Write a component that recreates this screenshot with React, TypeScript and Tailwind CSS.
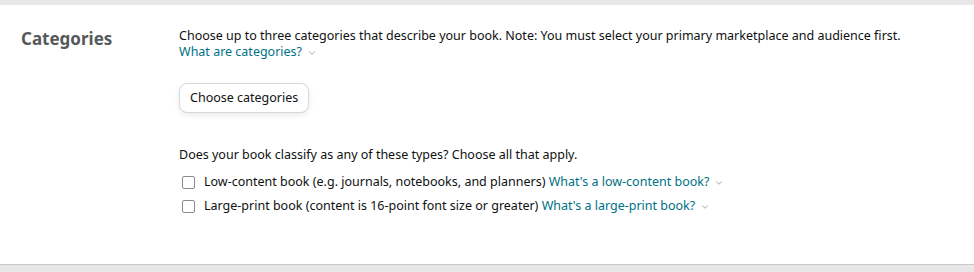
import { ChevronDown } from 'lucide-react'

function HelpLink({ label }: { label: string }) {
  return (
    <a href="#" className="inline-flex items-center gap-[5px] text-[#007185] hover:underline">
      {label}
      <ChevronDown size={10} strokeWidth={1.5} className="text-[#6f7373] mt-[1px]" />
    </a>
  )
}

function TypeCheckbox({ label, help }: { label: string; help: string }) {
  return (
    <label className="flex items-center gap-[9px] pl-[3px]">
      <input type="checkbox" className="w-[13px] h-[13px] m-0 appearance-none rounded-[2px] border border-[#888c8c] bg-white" />
      <span>
        {label} <HelpLink label={help} />
      </span>
    </label>
  )
}

export default function App() {
  return (
    <div className="w-[974px] h-[272px] bg-[#e7e7e7] flex flex-col font-['Noto_Sans',sans-serif] text-[12.5px] text-[#0f1111]">
      <div className="mt-[5px] flex-1 bg-white border-b border-[#c9c9c9] flex">
        <div className="w-[179px] pl-[21px] pt-[24px]">
          <h2 className="text-[17px] leading-[20px] font-bold text-[#565959]">Categories</h2>
        </div>
        <div className="flex-1 pt-[23px]">
          <p className="leading-[16px]">
            Choose up to three categories that describe your book. Note: You must select your primary marketplace and audience first.
          </p>
          <div className="leading-[16px]">
            <HelpLink label="What are categories?" />
          </div>
          <button className="mt-[23px] h-[30px] px-[10px] rounded-[8px] border border-[#d5d9d9] bg-white shadow-[0_2px_5px_rgba(213,217,217,0.5)]">
            Choose categories
          </button>
          <p className="mt-[34px] leading-[16px]">Does your book classify as any of these types? Choose all that apply.</p>
          <div className="mt-[11px] flex flex-col gap-[8px] leading-[16px]">
            <TypeCheckbox
              label="Low-content book (e.g. journals, notebooks, and planners)"
              help="What's a low-content book?"
            />
            <TypeCheckbox
              label="Large-print book (content is 16-point font size or greater)"
              help="What's a large-print book?"
            />
          </div>
        </div>
      </div>
      <div className="h-[7px]" />
    </div>
  )
}
